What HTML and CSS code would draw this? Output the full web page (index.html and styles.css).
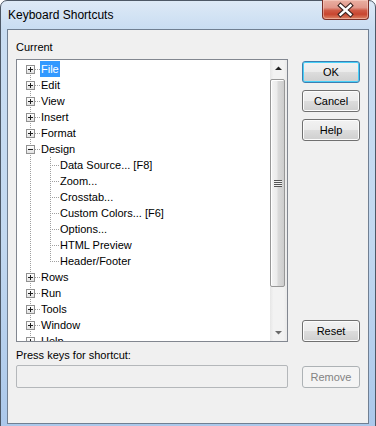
FILE: index.html
```html
<!DOCTYPE html>
<html>
<head>
    <title>Keyboard Shortcuts</title>
    <link rel="stylesheet" href="styles.css">
</head>
<body>
    <div class="window">
        <div class="titlebar">
            <span class="title">Keyboard Shortcuts</span>
            <button class="close" type="button">
                <svg width="47" height="20" viewBox="0 0 47 20">
                    <path d="M18.5 5.5 L28.5 14.5 M28.5 5.5 L18.5 14.5" stroke="#3b2420" stroke-width="4.6" stroke-linecap="square" fill="none"/>
                    <path d="M18.5 5.5 L28.5 14.5 M28.5 5.5 L18.5 14.5" stroke="#fff" stroke-width="2.4" stroke-linecap="square" fill="none"/>
                </svg>
            </button>
        </div>
        <div class="client">
            <div class="left">
                <label class="caption first">Current</label>
                <div class="tree">
                    <ul class="nodes">
                        <li class="node"><span class="twig top"><i class="box plus"></i></span><span class="label selected">File</span></li>
                        <li class="node"><span class="twig"><i class="box plus"></i></span><span class="label">Edit</span></li>
                        <li class="node"><span class="twig"><i class="box plus"></i></span><span class="label">View</span></li>
                        <li class="node"><span class="twig"><i class="box plus"></i></span><span class="label">Insert</span></li>
                        <li class="node"><span class="twig"><i class="box plus"></i></span><span class="label">Format</span></li>
                        <li class="node"><span class="twig"><i class="box minus"></i></span><span class="label">Design</span></li>
                        <li class="node"><span class="twig pipe"></span><span class="sprig"></span><span class="label">Data Source... [F8]</span></li>
                        <li class="node"><span class="twig pipe"></span><span class="sprig"></span><span class="label">Zoom...</span></li>
                        <li class="node"><span class="twig pipe"></span><span class="sprig"></span><span class="label">Crosstab...</span></li>
                        <li class="node"><span class="twig pipe"></span><span class="sprig"></span><span class="label">Custom Colors... [F6]</span></li>
                        <li class="node"><span class="twig pipe"></span><span class="sprig"></span><span class="label">Options...</span></li>
                        <li class="node"><span class="twig pipe"></span><span class="sprig"></span><span class="label">HTML Preview</span></li>
                        <li class="node"><span class="twig pipe"></span><span class="sprig last"></span><span class="label">Header/Footer</span></li>
                        <li class="node"><span class="twig"><i class="box plus"></i></span><span class="label">Rows</span></li>
                        <li class="node"><span class="twig"><i class="box plus"></i></span><span class="label">Run</span></li>
                        <li class="node"><span class="twig"><i class="box plus"></i></span><span class="label">Tools</span></li>
                        <li class="node"><span class="twig"><i class="box plus"></i></span><span class="label">Window</span></li>
                        <li class="node"><span class="twig"><i class="box plus"></i></span><span class="label">Help</span></li>
                    </ul>
                    <div class="scrollbar">
                        <div class="arrow">
                            <svg width="17" height="17" viewBox="0 0 17 17"><path d="M5 10 L12 10 L8.5 6.5 Z" fill="#222"/></svg>
                        </div>
                        <div class="track">
                            <div class="thumb"><span class="grip"></span></div>
                        </div>
                        <div class="arrow">
                            <svg width="17" height="17" viewBox="0 0 17 17"><path d="M5 7 L12 7 L8.5 10.5 Z" fill="#6a6a6a"/></svg>
                        </div>
                    </div>
                </div>
                <label class="caption second">Press keys for shortcut:</label>
                <input class="keys" type="text" disabled>
            </div>
            <div class="right">
                <button class="btn default" type="button">OK</button>
                <button class="btn" type="button">Cancel</button>
                <button class="btn" type="button">Help</button>
                <button class="btn reset" type="button">Reset</button>
                <button class="btn remove" type="button" disabled>Remove</button>
            </div>
        </div>
    </div>
</body>
</html>
```
FILE: styles.css
```css
html, body {
    margin: 0;
    height: 426px;
    overflow: hidden;
}
body {
    font-family: "Liberation Sans", Arial, sans-serif;
    font-size: 11px;
    color: #000;
    background: #fff;
}
.window {
    width: 376px;
    height: 440px;
    box-sizing: border-box;
    border: 1px solid #4d5866;
    border-radius: 7px 7px 0 0;
    background: linear-gradient(to bottom, #dde9f6 0, #c9ddf2 28px, #c2d8f0 55%, #aac7ea 100%);
    padding: 0 6px 6px;
}
.titlebar {
    display: flex;
    justify-content: space-between;
    height: 28px;
}
.title {
    font-size: 12px;
    line-height: 16px;
    padding: 6px 0 0 1px;
    color: #000;
}
.close {
    width: 47px;
    height: 20px;
    margin-top: -1px;
    padding: 0;
    border: 1px solid #7a2f27;
    border-top: none;
    border-radius: 0 0 4px 4px;
    background: linear-gradient(to bottom, #eab0a2 0, #e1978a 40%, #cf5a45 55%, #c8452f 75%, #dc8567 100%);
    box-shadow: inset 0 0 0 1px rgba(255, 220, 210, 0.45);
    display: flex;
    align-items: center;
    justify-content: center;
    overflow: hidden;
}
.close svg {
    display: block;
    flex: none;
}
.client {
    height: 393px;
    border: 1px solid #707f92;
    background: #f0f0f0;
    display: grid;
    grid-template-columns: 272px 58px;
    column-gap: 14px;
    padding-left: 8px;
    align-items: start;
}
.left {
    display: flex;
    flex-direction: column;
}
.caption {
    display: block;
    line-height: 14px;
}
.caption.first {
    margin: 10px 0 5px;
}
.caption.second {
    margin: 6px 0 3px;
}
.tree {
    height: 283px;
    box-sizing: border-box;
    border: 1px solid #828790;
    background: #fff;
    display: flex;
}
.nodes {
    list-style: none;
    margin: 0;
    padding: 1px 0 0;
    flex: 1;
    overflow: hidden;
}
.node {
    display: flex;
    height: 16px;
    line-height: 16px;
    white-space: nowrap;
}
.twig {
    flex: none;
    width: 23px;
    height: 16px;
    box-sizing: border-box;
    padding: 4px 0 0 9px;
    background:
        repeating-linear-gradient(to bottom, #a0a0a0 0 1px, transparent 1px 2px) 13px 0 / 1px 16px no-repeat,
        repeating-linear-gradient(to right, #a0a0a0 0 1px, transparent 1px 2px) 18px 8px / 5px 1px no-repeat;
}
.twig.top {
    background:
        repeating-linear-gradient(to bottom, #a0a0a0 0 1px, transparent 1px 2px) 13px 8px / 1px 8px no-repeat,
        repeating-linear-gradient(to right, #a0a0a0 0 1px, transparent 1px 2px) 18px 8px / 5px 1px no-repeat;
}
.twig.pipe {
    background: repeating-linear-gradient(to bottom, #a0a0a0 0 1px, transparent 1px 2px) 13px 0 / 1px 16px no-repeat;
}
.sprig {
    flex: none;
    width: 19px;
    height: 16px;
    background:
        repeating-linear-gradient(to bottom, #a0a0a0 0 1px, transparent 1px 2px) 10px 0 / 1px 16px no-repeat,
        repeating-linear-gradient(to right, #a0a0a0 0 1px, transparent 1px 2px) 12px 8px / 7px 1px no-repeat;
}
.sprig.last {
    background:
        repeating-linear-gradient(to bottom, #a0a0a0 0 1px, transparent 1px 2px) 10px 0 / 1px 9px no-repeat,
        repeating-linear-gradient(to right, #a0a0a0 0 1px, transparent 1px 2px) 12px 8px / 7px 1px no-repeat;
}
.box {
    display: block;
    width: 9px;
    height: 9px;
    box-sizing: border-box;
    border: 1px solid #919191;
}
.box.plus {
    background:
        linear-gradient(#1e1e1e, #1e1e1e) center / 5px 1px no-repeat,
        linear-gradient(#1e1e1e, #1e1e1e) center / 1px 5px no-repeat,
        linear-gradient(#ffffff, #e2e2e2);
}
.box.minus {
    background:
        linear-gradient(#1e1e1e, #1e1e1e) center / 5px 1px no-repeat,
        linear-gradient(#ffffff, #e2e2e2);
}
.label {
    padding: 0 1px;
    height: 16px;
}
.label.selected {
    background: #3399ff;
    color: #fff;
}
.scrollbar {
    flex: none;
    width: 17px;
    display: flex;
    flex-direction: column;
    background: linear-gradient(to right, #e6e6e6 0, #f2f2f2 20%, #f2f2f2 80%, #e9e9e9 100%);
}
.arrow {
    height: 17px;
    flex: none;
}
.arrow svg {
    display: block;
}
.track {
    flex: 1;
    padding-top: 2px;
}
.thumb {
    width: 15px;
    height: 208px;
    box-sizing: border-box;
    border: 1px solid #979797;
    border-radius: 2px;
    background: linear-gradient(to right, #f4f4f4 0, #ebebeb 45%, #dadada 55%, #cdcdcd 100%);
    box-shadow: inset 1px 1px 0 #fff;
    display: flex;
    align-items: center;
    justify-content: center;
}
.grip {
    width: 8px;
    height: 7px;
    background: repeating-linear-gradient(to bottom, #555 0 1px, #f2f2f2 1px 2px);
}
.keys {
    height: 23px;
    box-sizing: border-box;
    margin: 0;
    border: 1px solid #b4b7ba;
    border-radius: 2px;
    background: #f0f0f0;
}
.right {
    display: flex;
    flex-direction: column;
    padding-top: 31px;
}
.btn {
    height: 22px;
    width: 58px;
    padding: 0;
    margin: 0 0 7px;
    font-family: "Liberation Sans", Arial, sans-serif;
    font-size: 11px;
    color: #000;
    border: 1px solid #707070;
    border-radius: 3px;
    background: linear-gradient(to bottom, #f2f2f2 0, #ebebeb 50%, #dddddd 50%, #cfcfcf 100%);
    box-shadow: inset 0 0 0 1px #fcfcfc;
}
.btn.default {
    border-color: #3c7fb1;
    box-shadow: inset 0 0 0 1px #48d0f8;
}
.btn.reset {
    margin-top: 172px;
    margin-bottom: 24px;
}
.btn.remove {
    color: #838383;
    border-color: #adb2b5;
    background: #f4f4f4;
    box-shadow: none;
}
```
